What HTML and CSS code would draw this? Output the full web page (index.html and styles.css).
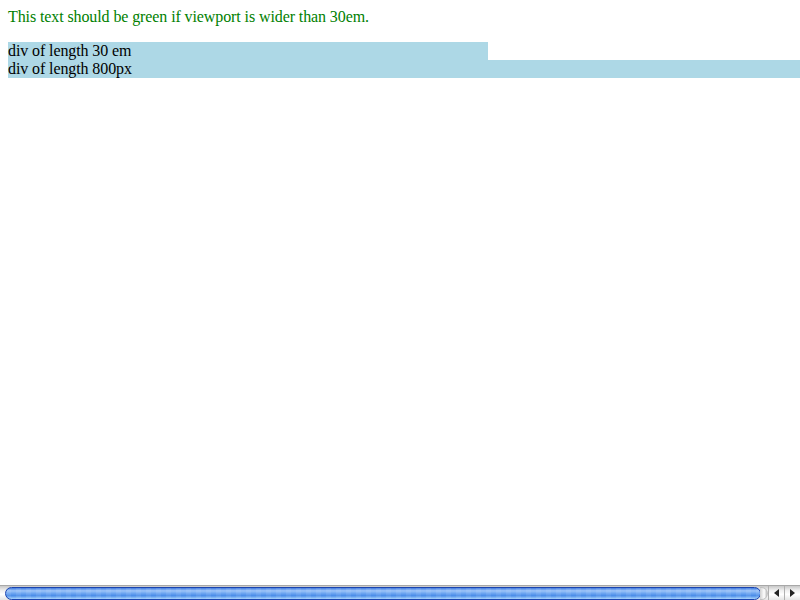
FILE: index.html
```html
<!DOCTYPE html>
<html>
<head>
<meta charset="utf-8">
<link rel="stylesheet" href="styles.css">
</head>
<body>
<div class="page">
  <div class="note">This text should be green if viewport is wider than 30em.</div>
  <div class="bar bar-em">div of length 30 em</div>
  <div class="bar bar-px">div of length 800px</div>
</div>
<div class="hscroll">
  <div class="track">
    <div class="thumb"></div>
    <div class="cap"></div>
  </div>
  <div class="btn"><span class="arr arr-left"></span></div>
  <div class="btn"><span class="arr arr-right"></span></div>
</div>
</body>
</html>
```
FILE: styles.css
```css
html { overflow: hidden; }
body {
  margin: 0;
  font-family: "Liberation Serif", "Times New Roman", serif;
  font-size: 16px;
  line-height: 18px;
  color: #000;
  letter-spacing: -0.1px;
}
.page {
  width: 792px;
  padding: 8px 0 0 8px;
  overflow: hidden;
}
.note {
  color: #008000;
  margin-bottom: 16px;
}
.bar { background: #add8e6; }
.bar-em { width: 480px; }
.bar-px { width: 800px; }

.hscroll {
  position: fixed;
  left: 0;
  bottom: 0;
  width: 800px;
  height: 15px;
  display: flex;
  background: linear-gradient(#c8c8c8, #eeeeee 30%, #ffffff 60%, #e4e4e4);
  border-top: 1px solid #a8a8a8;
  box-sizing: border-box;
}
.track {
  flex: 1;
  display: flex;
  align-items: center;
  padding-left: 5px;
}
.thumb {
  flex: 1;
  height: 13px;
  border-radius: 7px;
  border: 1px solid #1a44b0;
  box-sizing: border-box;
  background:
    repeating-linear-gradient(90deg, rgba(255,255,255,0.08) 0 5px, rgba(0,0,0,0) 5px 10px),
    linear-gradient(#3f7ae0, #9cc4f8 25%, #6aa3f0 50%, #4a8ce8 70%, #a8d4fc);
}
.cap {
  width: 8px;
  height: 13px;
  border-radius: 0 7px 7px 0;
  background: linear-gradient(90deg, #cfcfcf, #ffffff 60%, #bdbdbd);
  border: 1px solid #c0c0c0;
  border-left: none;
  box-sizing: border-box;
  margin-left: -1px;
}
.btn {
  width: 16px;
  height: 14px;
  border-left: 1px solid #b0b0b0;
  box-sizing: border-box;
  display: flex;
  align-items: center;
  justify-content: center;
}
.arr {
  width: 0;
  height: 0;
  border-top: 4px solid transparent;
  border-bottom: 4px solid transparent;
}
.arr-left { border-right: 5px solid #222; }
.arr-right { border-left: 5px solid #222; }
```
